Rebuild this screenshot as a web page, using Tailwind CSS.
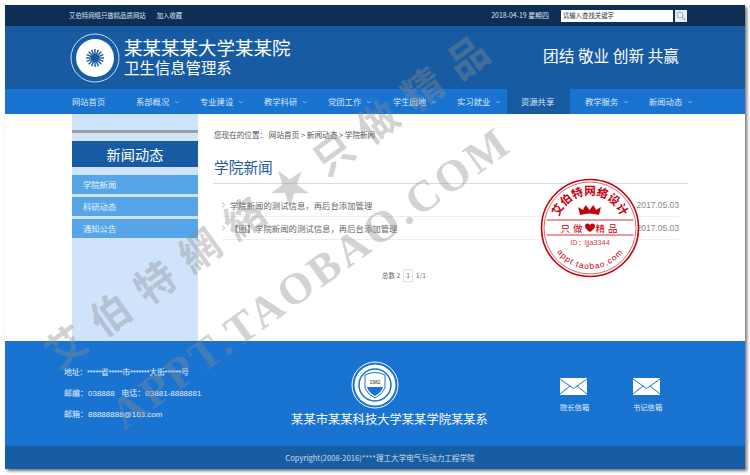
<!DOCTYPE html>
<html lang="zh-CN">
<head>
  <meta charset="UTF-8">
  <title>学院新闻</title>
  <script src="https://cdn.jsdelivr.net/npm/@tailwindcss/browser@4"></script>
</head>
<body class="bg-white relative w-[750px] h-[475px] overflow-hidden font-['Noto_Sans_CJK_SC','Liberation_Sans',sans-serif]">

  <div class="ml-[5px] mt-[5px] w-[740px] h-[464px] flex flex-col shadow-[2px_2px_3px_rgba(0,0,0,0.55)]">

    <!-- top bar -->
    <div class="h-[21px] bg-[#0d2e56] flex items-center text-[6.4px] text-[#dfe6ee] pl-[64px]">
      <span>艾伯特网络只做精品质网站</span>
      <span class="ml-[11px]">加入收藏</span>
      <span class="ml-[309px] text-[6.9px]">2018-04-19 星期四</span>
      <div class="ml-[12px] w-[112px] h-[12px] bg-white text-[#333] pl-[2px] leading-[12px]">请输入查找关键字</div>
      <div class="ml-[2px] w-[12px] h-[12px] bg-[#e6edf3] flex items-center justify-center">
        <svg width="10" height="10" viewBox="0 0 10 10" fill="none" stroke="#9fb2c2" stroke-width="1"><circle cx="4" cy="4" r="3"/><path d="M6.3 6.3L9.3 9.3" stroke-width="1.5"/></svg>
      </div>
    </div>

    <!-- header -->
    <div class="h-[63px] bg-[#175ca3] flex items-center text-white pl-[65px]">
      <svg width="50" height="50" viewBox="0 0 50 50" class="shrink-0">
        <circle cx="25" cy="25" r="24" fill="none" stroke="#c9dcef" stroke-width="1"/>
        <circle cx="25" cy="25" r="19" fill="#fff"/>
        <g stroke="#15589f" stroke-width="1.4">
          <line x1="25" y1="16" x2="25" y2="34"/>
          <line x1="25" y1="16" x2="25" y2="34" transform="rotate(22.5 25 25)"/>
          <line x1="25" y1="16" x2="25" y2="34" transform="rotate(45 25 25)"/>
          <line x1="25" y1="16" x2="25" y2="34" transform="rotate(67.5 25 25)"/>
          <line x1="25" y1="16" x2="25" y2="34" transform="rotate(90 25 25)"/>
          <line x1="25" y1="16" x2="25" y2="34" transform="rotate(112.5 25 25)"/>
          <line x1="25" y1="16" x2="25" y2="34" transform="rotate(135 25 25)"/>
          <line x1="25" y1="16" x2="25" y2="34" transform="rotate(157.5 25 25)"/>
        </g>
        <circle cx="25" cy="25" r="4" fill="#15589f"/>
      </svg>
      <div class="ml-[4px] w-[419px] -mt-[3px]">
        <div class="text-[18.5px] leading-[22px]">某某某某大学某某院</div>
        <div class="text-[15.4px] leading-[18px]">卫生信息管理系</div>
      </div>
      <div class="text-[15.7px] leading-[20px] whitespace-pre -mt-[4px]">团结 敬业 创新 共赢</div>
    </div>

    <!-- nav -->
    <div class="h-[25px] bg-[#1873d1] flex pl-[52px] text-[8.3px] text-[#dbe8f6] leading-[25px]">
      <div class="w-[64px] pl-[15px]">网站首页</div>
      <div class="w-[64px] pl-[15px] flex items-center">系部概况<svg class="ml-[5px]" width="6" height="4" viewBox="0 0 6 4" fill="none" stroke="#7fb0e4"><path d="M1 1l2 2 2-2"/></svg></div>
      <div class="w-[64px] pl-[15px] flex items-center">专业建设<svg class="ml-[5px]" width="6" height="4" viewBox="0 0 6 4" fill="none" stroke="#7fb0e4"><path d="M1 1l2 2 2-2"/></svg></div>
      <div class="w-[64px] pl-[15px] flex items-center">教学科研<svg class="ml-[5px]" width="6" height="4" viewBox="0 0 6 4" fill="none" stroke="#7fb0e4"><path d="M1 1l2 2 2-2"/></svg></div>
      <div class="w-[65px] pl-[15px] flex items-center">党团工作<svg class="ml-[5px]" width="6" height="4" viewBox="0 0 6 4" fill="none" stroke="#7fb0e4"><path d="M1 1l2 2 2-2"/></svg></div>
      <div class="w-[64px] pl-[15px] flex items-center">学生园地<svg class="ml-[5px]" width="6" height="4" viewBox="0 0 6 4" fill="none" stroke="#7fb0e4"><path d="M1 1l2 2 2-2"/></svg></div>
      <div class="w-[65px] pl-[15px] flex items-center whitespace-nowrap">实习就业<svg class="ml-[5px] shrink-0" width="6" height="4" viewBox="0 0 6 4" fill="none" stroke="#7fb0e4"><path d="M1 1l2 2 2-2"/></svg></div>
      <div class="w-[63px] pl-[14px] bg-[#175ca3]">资源共享</div>
      <div class="w-[64px] pl-[15px] flex items-center">教学服务<svg class="ml-[5px]" width="6" height="4" viewBox="0 0 6 4" fill="none" stroke="#7fb0e4"><path d="M1 1l2 2 2-2"/></svg></div>
      <div class="w-[64px] pl-[15px] flex items-center">新闻动态<svg class="ml-[5px]" width="6" height="4" viewBox="0 0 6 4" fill="none" stroke="#7fb0e4"><path d="M1 1l2 2 2-2"/></svg></div>
    </div>

    <!-- main -->
    <div class="h-[227px] flex pl-[67px]">
      <div class="w-[126px] bg-[#cfe3fb] pt-[16px]">
        <div class="h-[3px] bg-[#9a9fa5]"></div>
        <div class="mt-[8px] h-[26px] bg-[#175ca3] text-white text-[14.2px] leading-[26px] text-center">新闻动态</div>
        <div class="mt-[8px] flex flex-col gap-[3px] text-[8.3px] text-[#e8f2fc]">
          <div class="h-[19px] leading-[19px] bg-[#56a5e8] pl-[11px]">学院新闻</div>
          <div class="h-[19px] leading-[19px] bg-[#56a5e8] pl-[11px]">科研动态</div>
          <div class="h-[19px] leading-[19px] bg-[#56a5e8] pl-[11px]">通知公告</div>
        </div>
      </div>

      <div class="w-[475px] ml-[15px] pt-[15px]">
        <div class="text-[7.6px] leading-[12px] text-[#555] pl-[1px] whitespace-pre">您现在的位置： 网站首页 &gt; 新闻动态 &gt; 学院新闻</div>
        <div class="mt-[14px] h-[29px] border-b border-[#dcdcdc] text-[14.7px] leading-[24px] text-[#1d5c95] pl-[1px]">学院新闻</div>
        <div class="mt-[10px] ml-[9px] w-[457px] text-[8.4px] text-[#666]">
          <div class="h-[23px] border-b border-[#eee] flex items-center justify-between">
            <span class="flex items-center"><svg class="mr-[5px]" width="3" height="6" viewBox="0 0 3 6" fill="none" stroke="#999" stroke-width="0.7"><path d="M0.5 0.5l2 2.5-2 2.5"/></svg>学院新闻的测试信息，再后台添加管理</span>
            <span class="text-[8.5px] text-[#888] font-['Liberation_Sans',sans-serif]">2017.05.03</span>
          </div>
          <div class="h-[23px] border-b border-[#eee] flex items-center justify-between">
            <span class="flex items-center"><svg class="mr-[5px]" width="3" height="6" viewBox="0 0 3 6" fill="none" stroke="#999" stroke-width="0.7"><path d="M0.5 0.5l2 2.5-2 2.5"/></svg>【图】学院新闻的测试信息，再后台添加管理</span>
            <span class="text-[8.5px] text-[#888] font-['Liberation_Sans',sans-serif]">2017.05.03</span>
          </div>
        </div>
        <div class="mt-[29px] ml-[169px] flex items-center text-[6.5px] text-[#666]">
          <span>总数 2</span>
          <span class="ml-[3px] w-[10px] h-[13px] border border-[#e2e2e2] text-center leading-[11px] text-[#4a79a8]">1</span>
          <span class="ml-[3px]">1/1</span>
        </div>
      </div>
    </div>

    <!-- footer -->
    <div class="h-[105px] bg-[#1873d1] flex text-[#e4eefa] text-[8px] pl-[59px]">
      <div class="w-[227px] pt-[26px] flex flex-col gap-[9.5px] leading-[11.5px] whitespace-pre font-['Liberation_Sans','Noto_Sans_CJK_SC',sans-serif]">
        <div class="tracking-[-0.35px]">地址：*****省*****市*******大街******号</div>
        <div>邮编：038888   电话：03881-8888881</div>
        <div>邮箱：88888888@163.com</div>
      </div>
      <div class="w-[197px] flex flex-col items-center pt-[20px]">
        <svg class="mr-[30px]" width="48" height="48" viewBox="0 0 48 48">
          <circle cx="24" cy="24" r="23" fill="none" stroke="#fff" stroke-width="1"/>
          <circle cx="24" cy="24" r="20.5" fill="#fff"/>
          <circle cx="24" cy="24" r="16" fill="#fff" stroke="#1873d1" stroke-width="1.5"/>
          <path d="M14 14q10-5 20 0v13q-3 7-10 10q-7-3-10-10z" fill="#fff" stroke="#1873d1" stroke-width="1"/>
          <path d="M16 26h16q-1 5-8 9q-7-4-8-9z" fill="#1873d1"/>
          <text x="24" y="22.5" text-anchor="middle" font-size="5" fill="#333" font-family="Liberation Sans">1982</text>
        </svg>
        <div class="mt-[2px] text-[12.3px] leading-[16px] text-white whitespace-nowrap">某某市某某科技大学某某学院某某系</div>
      </div>
      <div class="flex pl-[72px] gap-[44px] text-[7.3px] pt-[37px]">
        <div class="w-[29px]">
          <svg width="27" height="17" viewBox="0 0 27 17"><rect width="27" height="17" fill="#fff"/><path d="M0 1l13.5 9.5L27 1M0 16l10-8M27 16l-10-8" fill="none" stroke="#1873d1" stroke-width="1"/></svg>
          <div class="mt-[7px] leading-[10px] whitespace-nowrap">院长信箱</div>
        </div>
        <div class="w-[29px]">
          <svg width="27" height="17" viewBox="0 0 27 17"><rect width="27" height="17" fill="#fff"/><path d="M0 1l13.5 9.5L27 1M0 16l10-8M27 16l-10-8" fill="none" stroke="#1873d1" stroke-width="1"/></svg>
          <div class="mt-[7px] leading-[10px] whitespace-nowrap">书记信箱</div>
        </div>
      </div>
    </div>
    <div class="h-[23px] bg-[#165da3] pl-[10px] text-center text-[7.6px] leading-[23px] text-[#d0deec]">Copyright(2008-2016)****理工大学电气与动力工程学院</div>
  </div>

  <!-- watermark -->
  <div class="absolute left-[37px] top-[323px] flex rotate-[-35.8deg] origin-[27.5px_22px] text-[40px] leading-[44px] font-bold text-[#8c8c8c]/40 pointer-events-none">
    <span class="w-[55px] text-center">艾</span>
    <span class="w-[55px] text-center">伯</span>
    <span class="w-[55px] text-center">特</span>
    <span class="w-[55px] text-center">網</span>
    <span class="w-[55px] text-center">絡</span>
    <span class="w-[55px] text-center">★</span>
    <span class="w-[55px] text-center">只</span>
    <span class="w-[55px] text-center">做</span>
    <span class="w-[55px] text-center">精</span>
    <span class="w-[55px] text-center">品</span>
  </div>
  <div class="absolute left-[113px] top-[385px] rotate-[-35.8deg] origin-[15px_25px] text-[44px] leading-[50px] tracking-[3.5px] font-bold whitespace-nowrap text-[#8c8c8c]/40 font-['Liberation_Serif',serif] pointer-events-none">APPT.TAOBAO.COM</div>

  <!-- stamp -->
  <svg class="absolute left-[540px] top-[178px]" width="100" height="100" viewBox="0 0 100 100">
    <defs>
      <path id="arcTop" d="M17 50a33 33 0 0 1 66 0"/>
      <path id="arcBottom" d="M9 50a41 41 0 0 0 82 0"/>
    </defs>
    <circle cx="50" cy="50" r="48.5" fill="#fff" stroke="#c4000c" stroke-width="1.6"/>
    <circle cx="50" cy="50" r="46" fill="none" stroke="#c4000c" stroke-width="0.6"/>
    <path d="M6.5 42h87M6.5 57h87" stroke="#c4000c" stroke-width="0.8"/>
    <text font-size="11.5" font-weight="700" fill="#c4000c" text-anchor="middle" font-family="Noto Sans CJK SC"><textPath href="#arcTop" startOffset="50%">艾伯特网络设计</textPath></text>
    <path d="M40 37l-2-8 5 3 3-5 4 5 4-5 3 5 5-3-2 8q-10-3-20 0z" fill="#c4000c" transform="translate(2 0) scale(0.95 1)"/>
    <text x="33" y="54" font-size="9.5" fill="#c4000c" text-anchor="middle" font-family="Noto Sans CJK SC" class="tracking-[3px]">只做</text>
    <path d="M50 54q-5-3-5-6a2.6 2.6 0 0 1 5-1a2.6 2.6 0 0 1 5 1q0 3-5 6z" fill="#c4000c"/>
    <text x="68" y="54" font-size="9.5" fill="#c4000c" text-anchor="middle" font-family="Noto Sans CJK SC" class="tracking-[3px]">精品</text>
    <text x="50" y="67" font-size="7.3" fill="#d04050" text-anchor="middle" font-family="Liberation Sans">ID：ljja3344</text>
    <text font-size="8.4" fill="#c4000c" text-anchor="middle" font-family="Liberation Sans" class="tracking-[1px]"><textPath href="#arcBottom" startOffset="50%">appt.taobao.com</textPath></text>
  </svg>

</body>
</html>
